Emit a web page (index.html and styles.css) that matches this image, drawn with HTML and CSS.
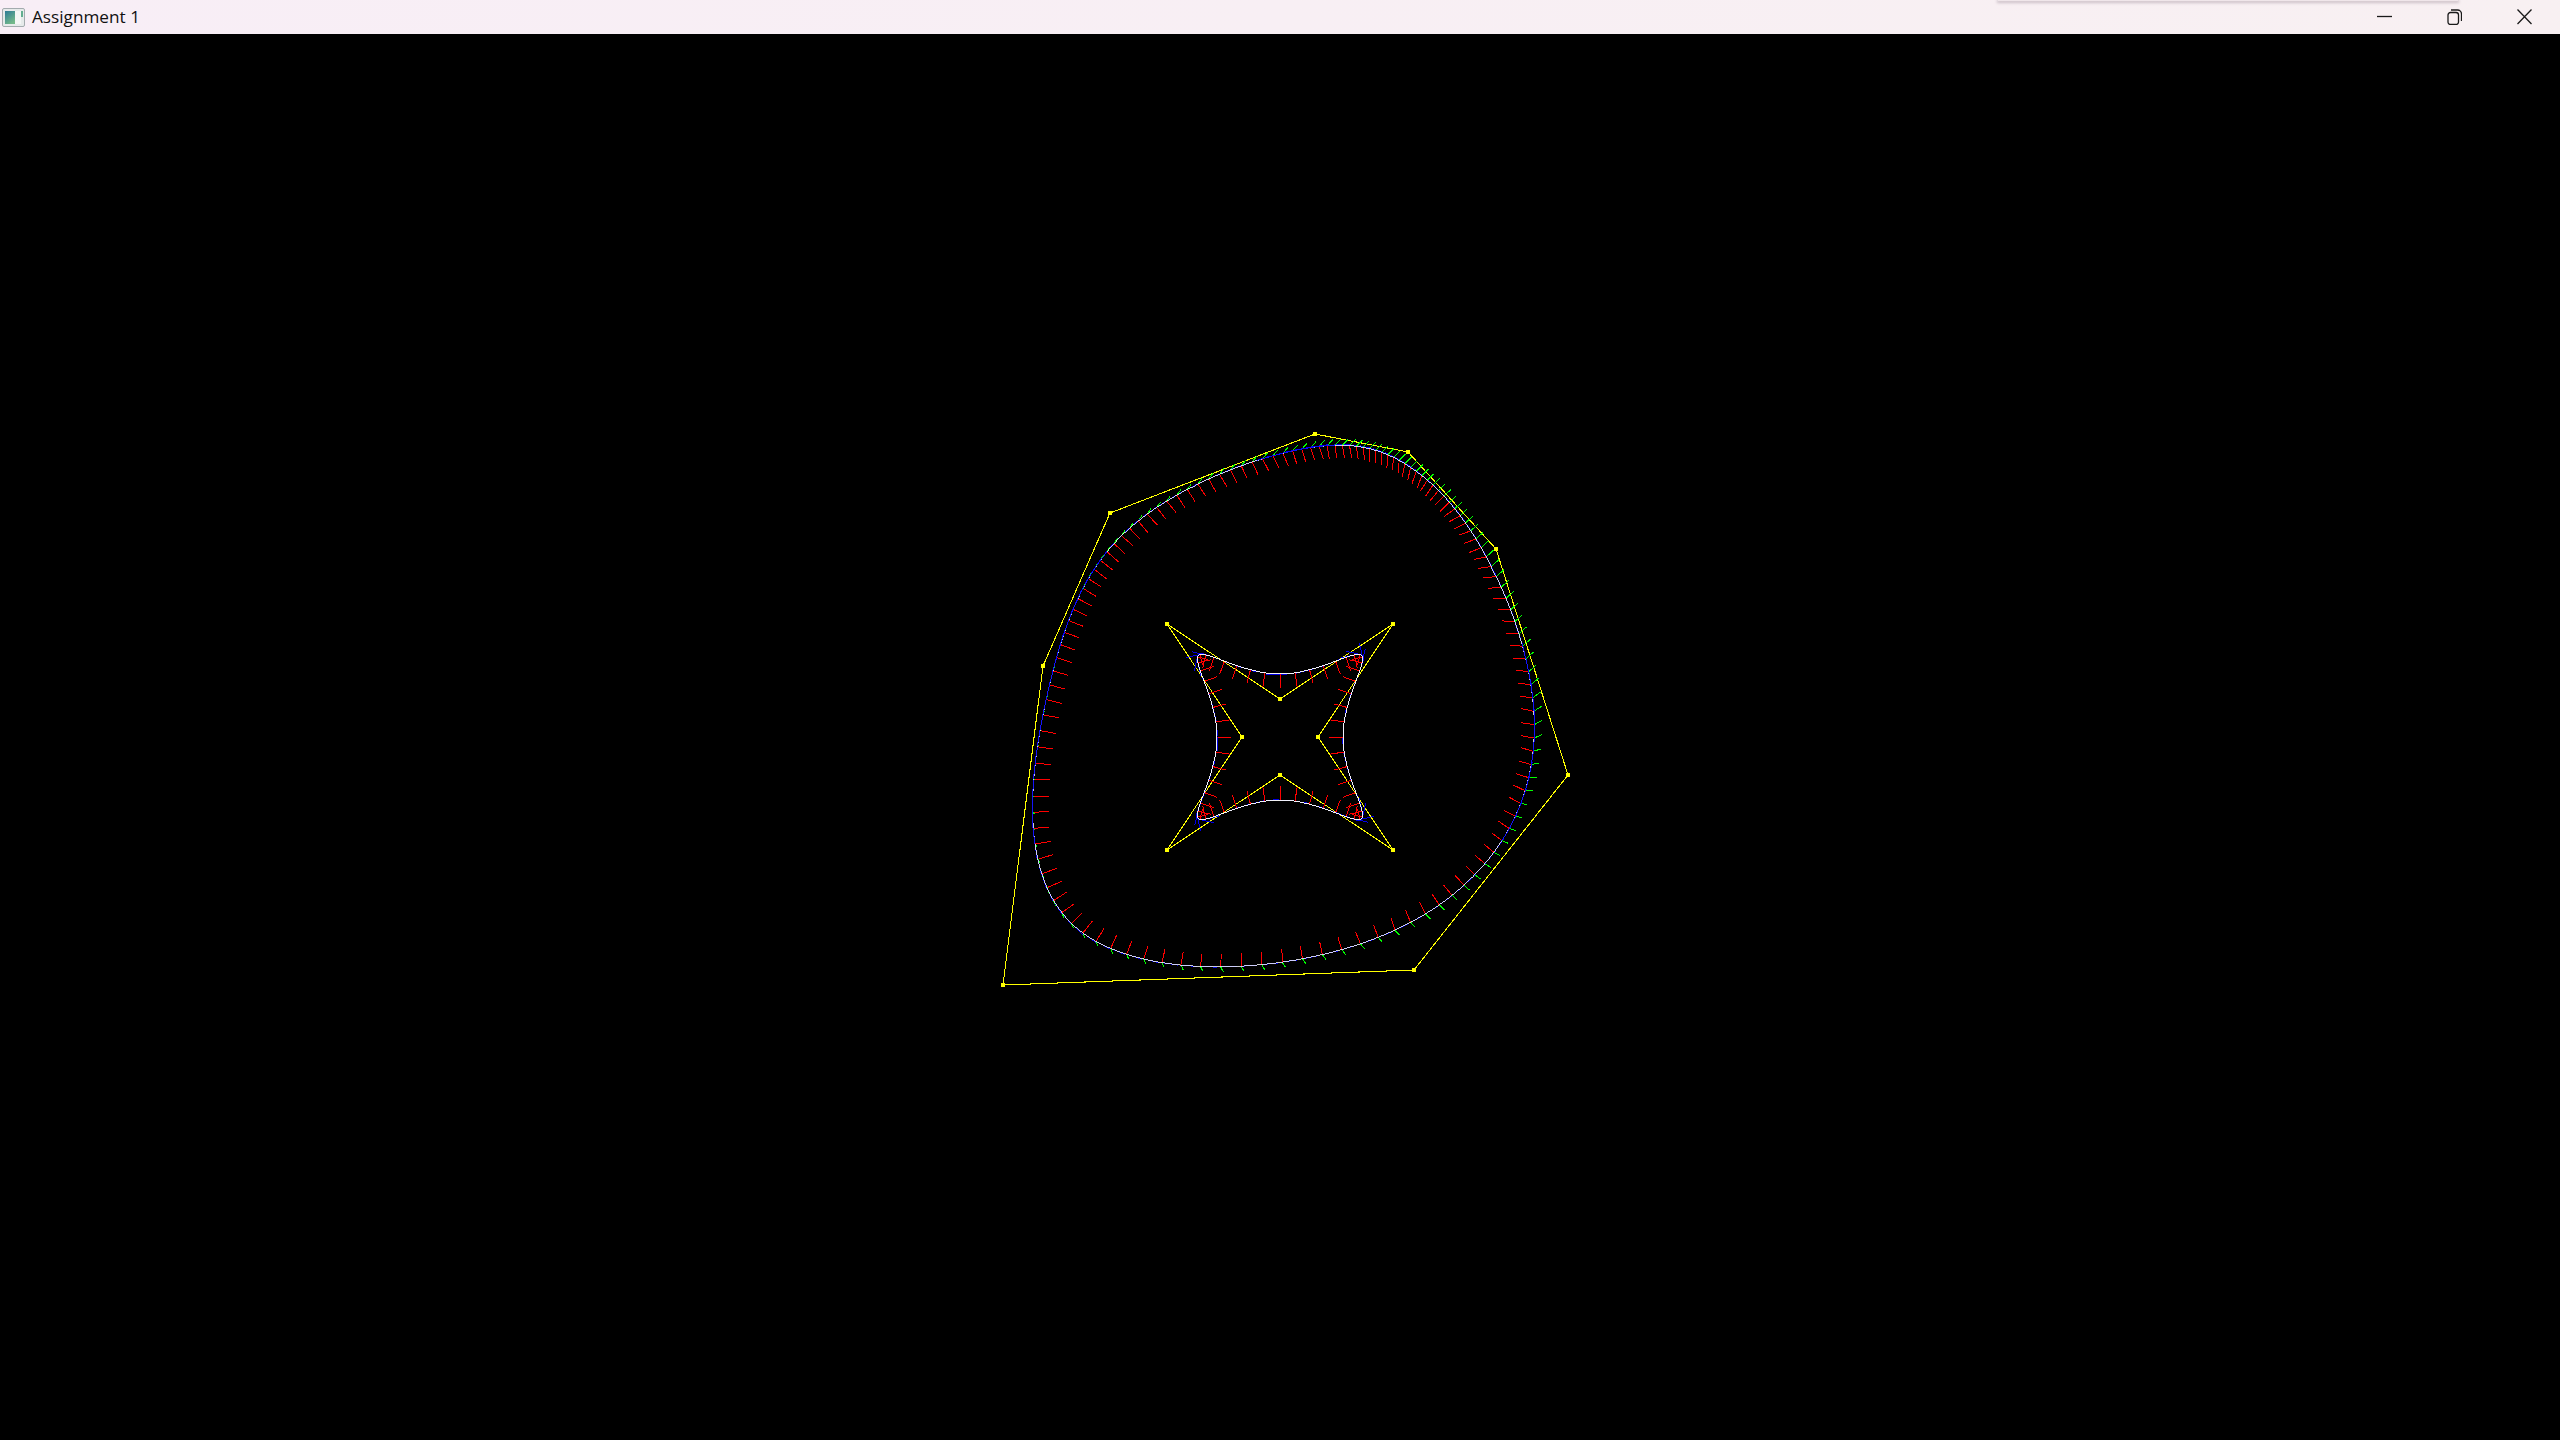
FILE: index.html
```html
<!DOCTYPE html>
<html lang="en">
<head>
<meta charset="utf-8">
<title>Assignment 1</title>
<link rel="stylesheet" href="styles.css">
</head>
<body>
<div class="window">
  <header class="titlebar">
    <div class="title-group">
      <svg class="app-icon" viewBox="0 0 23 19" width="23" height="19" aria-hidden="true">
        <defs>
          <linearGradient id="teal" x1="0" y1="0" x2="0.6" y2="1">
            <stop offset="0" stop-color="#2b7a96"/>
            <stop offset="1" stop-color="#74b98a"/>
          </linearGradient>
        </defs>
        <rect x="0.5" y="0.5" width="22" height="18" rx="1.5" fill="#e6eaea" stroke="#a3abae"/>
        <rect x="3" y="3" width="10" height="13" fill="url(#teal)"/>
        <rect x="13" y="3" width="6" height="13" fill="#f4f6f5"/>
        <rect x="19" y="3" width="2" height="6" fill="#63ad90"/>
      </svg>
      <span class="title-text">Assignment 1</span>
    </div>
    <div class="window-controls">
      <button class="control" aria-label="Minimize">
        <svg viewBox="0 0 15 16" width="15" height="16"><path class="glyph" d="M0 7.5H15"/></svg>
      </button>
      <button class="control" aria-label="Restore">
        <svg viewBox="0 0 15 16" width="15" height="16"><path class="glyph" d="M1 6a2.500 2.500 0 0 1 2.500-2.500h5.500a2.500 2.500 0 0 1 2.500 2.500v7a2.500 2.500 0 0 1-2.500 2.500h-5.500a2.500 2.500 0 0 1-2.500-2.500zM4 1h6.500a4 4 0 0 1 4 4v7"/></svg>
      </button>
      <button class="control" aria-label="Close">
        <svg viewBox="0 0 15 16" width="15" height="16"><path class="glyph" d="M0.500 0.500L14.500 15M14.500 0.500L0.500 15"/></svg>
      </button>
    </div>
    <div class="popup-shadow"></div>
  </header>
  <main class="viewport">
    <svg id="scene" class="scene" viewBox="0 0 2560 1406" width="2560" height="1406" shape-rendering="crispEdges"></svg>
  </main>
</div>
<script src="app.js"></script>
</body>
</html>
```
FILE: styles.css
```css
* { box-sizing: border-box; }
html, body { margin: 0; height: 100%; background: #000; overflow: hidden; }
.window { display: flex; flex-direction: column; height: 100vh; }
.titlebar {
  position: relative;
  flex: 0 0 34px;
  display: flex;
  justify-content: space-between;
  align-items: center;
  background: linear-gradient(90deg, #f8eef6, #f8f0f2);
}
.title-group { display: flex; align-items: center; gap: 7px; padding-left: 2px; }
.app-icon { display: block; }
.title-text { font: 17.2px/20px "Open Sans", "Noto Sans", sans-serif; color: #111; }
.window-controls { display: flex; padding-right: 1px; position: relative; z-index: 1; }
.control { width: 70px; height: 34px; padding: 0; border: 0; background: none; display: flex; align-items: center; justify-content: center; }
.control svg { display: block; }
.glyph { fill: none; stroke: #1a1a1a; stroke-width: 1.3; }
.popup-shadow {
  position: absolute;
  left: 1998px; top: 0;
  width: 460px; height: 1px;
  box-shadow: 0 1px 3px 1px rgba(90, 70, 85, 0.28);
  background: #f0e6ea;
}
.viewport { flex: 1; background: #000; overflow: hidden; }
.scene { display: block; }
.poly { fill: none; stroke: #ff0; stroke-width: 1.05; }
.curve { fill: none; stroke: #fff; stroke-width: 0.8; }
.curve-inner { stroke-width: 0.95; }
.tick-t { stroke: #00f; stroke-width: 0.9; }
.tick-n { stroke: #f00; stroke-width: 1; }
.tick-b { stroke: #0f0; stroke-width: 1; }
.handle { fill: #ff0; }
```
FILE: app.js
```js
// Closed uniform cubic B-splines with their moving frames. y is offset by the title bar.
var OFFSET = 34;
var outer = [[1110,513],[1043,666],[1003,985],[1414,970],[1568,775],[1496,549],[1408,452],[1315,434]];
var inner = [[1280,699],[1167,624],[1242,737],[1167,850],[1280,775],[1393,850],[1318,737],[1393,624]];
// Projected normal of the outer curve: [x, y, degrees from straight down, towards the right].
var normals = [
[1280,453,23],[1300,448,17],[1317,447,18],[1333,445,8],[1347,445,10],[1360,447,8],[1373,448,0],[1385,452,-3],[1395,458,-5],[1408,465,-12],[1419,472,-19],[1430,482,-33],[1438,490,-39],[1448,498,-45],[1455,510,-54],[1462,520,-62],[1472,533,-70],[1482,550,-68],[1490,560,-80],[1493,570,-82],[1500,578,-85],[1507,598,-87],[1513,610,-90],[1523,623,-95],[1522,633,-90],[1522,647,-95],[1525,658,-90],[1528,672,-98],[1530,685,-98],
[1532,697,-99],[1531,712,-102],[1531,725,-98],[1532,740,-100],[1530,753,-107],[1529,767,-106],[1526,780,-108],[1522,794,-116],[1517,807,-119],[1511,820,-116],[1505,833,-127],[1497,845,-127],[1490,858,-131],[1481,868,-131],[1471,878,-134],[1458,888,-139],[1448,888,-141],[1435,900,-146],[1421,908,-154],[1406,925,-157],[1391,933,-163],[1375,939,-160],[1358,946,-158],[1339,946,-163],[1319,951,-168],[1299,956,-171],[1279,958,-175],
[1279,962,180],[1260,966,180],[1240,967,177],[1220,967,177],[1200,966,173],[1180,965,170],[1162,962,167],[1143,958,162],[1127,953,159],[1111,948,156],[1096,941,148],[1083,932,142],[1072,923,135],[1062,912,125],[1054,900,123],[1047,887,113],[1042,873,110],[1038,858,107],[1035,843,100],[1033,827,95],[1032,810,93],[1033,793,90],[1034,777,90],[1037,760,84],[1038,743,82],[1042,727,80],[1044,711,80],[1049,695,76],
[1052,679,75],[1056,665,73],[1060,652,70],[1063,638,69],[1067,627,71],[1072,614,65],[1077,603,63],[1082,592,59],[1087,582,57],[1093,571,52],[1099,563,52],[1106,553,49],[1113,545,47],[1120,538,49],[1128,530,44],[1137,523,40],[1145,517,43],[1155,509,38],[1164,503,40],[1175,497,33],[1185,491,33],[1196,486,33],[1207,480,29],[1217,476,31],[1228,470,27],[1239,467,25],[1249,463,26],[1259,460,27],[1270,457,27]
];
var NS = 'http://www.w3.org/2000/svg';
var scene = document.getElementById('scene');

function el(name, cls, attrs) {
  var e = document.createElementNS(NS, name);
  e.setAttribute('class', cls);
  for (var k in attrs) e.setAttribute(k, attrs[k]);
  return e;
}
function evalSpline(p, s) {
  var n = p.length, i = Math.floor(s), u = s - i;
  var a = p[(i - 1 + 2 * n) % n], b = p[(i + n) % n], c = p[(i + 1) % n], d = p[(i + 2) % n];
  var u2 = u * u, u3 = u2 * u;
  var w = [(1 - u) * (1 - u) * (1 - u) / 6, (3 * u3 - 6 * u2 + 4) / 6, (-3 * u3 + 3 * u2 + 3 * u + 1) / 6, u3 / 6];
  var dw = [-(1 - u) * (1 - u) / 2, (9 * u2 - 12 * u) / 6, (-9 * u2 + 6 * u + 3) / 6, u2 / 2];
  return {
    x: w[0] * a[0] + w[1] * b[0] + w[2] * c[0] + w[3] * d[0],
    y: w[0] * a[1] + w[1] * b[1] + w[2] * c[1] + w[3] * d[1],
    dx: dw[0] * a[0] + dw[1] * b[0] + dw[2] * c[0] + dw[3] * d[0],
    dy: dw[0] * a[1] + dw[1] * b[1] + dw[2] * c[1] + dw[3] * d[1]
  };
}
function line(cls, x1, y1, x2, y2) {
  scene.appendChild(el('line', cls, {x1: x1, y1: y1 - OFFSET, x2: x2, y2: y2 - OFFSET}));
}
function clamp(v) { return Math.max(0, Math.min(1, v)); }
function binormal(q) {
  var t = clamp((q.x - 1035) / 500);
  if (q.y > 800) return [2 + 5 * t * t, 5 * clamp((q.y - 785) / 100)];
  var gx = t < 0.15 ? 1 + 15 * t : 3.25 + 5.5 * (t - 0.15);
  return [gx, -(5 + 2 * t) * clamp((785 - q.y) / 100)];
}
function outerNormal(q) {
  var i, d, w, sx = 0, sy = 0;
  for (i = 0; i < normals.length; i++) {
    d = Math.hypot(normals[i][0] - q.x, normals[i][1] - q.y) + 0.5;
    w = 1 / (d * d * d * d);
    sx += Math.sin(normals[i][2] * Math.PI / 180) * w;
    sy += Math.cos(normals[i][2] * Math.PI / 180) * w;
  }
  d = Math.hypot(sx, sy);
  var reach = 16 - 3 * clamp((q.x - 1040) / (q.y < 700 ? 300 : 150));
  return [reach * sx / d, reach * sy / d];
}
function blueOnTop(q) {
  return (q.x < 1110 && q.y > 550 && q.y < 830) ||
         (q.x > 1450 && q.y > 655 && q.y < 850) ||
         (q.y < 460 && q.x > 1265 && q.x < 1335);
}
function drawCurve(p, total, phase, isOuter) {
  var i, n = p.length, pts = [], over = [];
  var poly = p.map(function (q) { return q[0] + ',' + (q[1] - OFFSET); }).join(' ');
  scene.appendChild(el('polygon', 'poly', {points: poly}));
  for (i = 0; i < total; i++) {
    var q = evalSpline(p, ((i + phase + total) % total) * n / total);
    var speed = Math.hypot(q.dx, q.dy) || 1, tx = q.dx / speed, ty = q.dy / speed;
    var blue = isOuter ? 16 : 14;
    var reach = Math.min(14, 7 + speed * 0.12);
    var nv = isOuter ? outerNormal(q) : [reach * ty, -reach * tx];
    line('tick-n', q.x, q.y, q.x + nv[0], q.y + nv[1]);
    if (isOuter) { var g = binormal(q); line('tick-b', q.x, q.y, q.x + g[0], q.y + g[1]); }
    if (isOuter && blueOnTop(q)) over.push([q.x, q.y, q.x + blue * tx, q.y + blue * ty]);
    else line('tick-t', q.x, q.y, q.x + blue * tx, q.y + blue * ty);
  }
  for (i = 0; i < n * 40; i++) {
    var r = evalSpline(p, i / 40);
    pts.push(r.x.toFixed(2) + ',' + (r.y - OFFSET).toFixed(2));
  }
  scene.appendChild(el('polygon', isOuter ? 'curve' : 'curve curve-inner', {points: pts.join(' ')}));
  over.forEach(function (b) { line('tick-t', b[0], b[1], b[2], b[3]); });
  p.forEach(function (c) {
    scene.appendChild(el('rect', 'handle', {x: c[0] - 2, y: c[1] - OFFSET - 2, width: 4, height: 4}));
  });
}
drawCurve(outer, 128, -0.6, true);
drawCurve(inner, 60, 0, false);
```
